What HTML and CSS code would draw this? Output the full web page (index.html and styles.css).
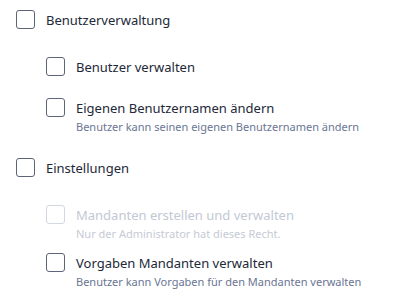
FILE: index.html
```html
<!DOCTYPE html>
<html lang="de">
<head>
    <meta charset="UTF-8">
    <title>Rechte</title>
    <link rel="stylesheet" href="styles.css">
</head>
<body>
    <div class="rights">
        <div class="group">
            <label class="item head">
                <span class="box"></span>
                <span class="text"><span class="label">Benutzerverwaltung</span></span>
            </label>
            <div class="children">
                <label class="item">
                    <span class="box"></span>
                    <span class="text"><span class="label">Benutzer verwalten</span></span>
                </label>
                <label class="item">
                    <span class="box"></span>
                    <span class="text">
                        <span class="label">Eigenen Benutzernamen ändern</span>
                        <span class="desc">Benutzer kann seinen eigenen Benutzernamen ändern</span>
                    </span>
                </label>
            </div>
        </div>
        <div class="group">
            <label class="item head">
                <span class="box"></span>
                <span class="text"><span class="label">Einstellungen</span></span>
            </label>
            <div class="children">
                <label class="item disabled">
                    <span class="box"></span>
                    <span class="text">
                        <span class="label">Mandanten erstellen und verwalten</span>
                        <span class="desc">Nur der Administrator hat dieses Recht.</span>
                    </span>
                </label>
                <label class="item">
                    <span class="box"></span>
                    <span class="text">
                        <span class="label">Vorgaben Mandanten verwalten</span>
                        <span class="desc">Benutzer kann Vorgaben für den Mandanten verwalten</span>
                    </span>
                </label>
            </div>
        </div>
    </div>
</body>
</html>
```

FILE: styles.css
```css
body {
    margin: 0;
    padding: 0;
    background: #ffffff;
    font-family: 'Noto Sans', sans-serif;
    color: #222838;
}

.rights {
    display: flex;
    flex-direction: column;
    gap: 23px;
    padding: 10px 16px 0;
}

.group {
    display: flex;
    flex-direction: column;
    gap: 27px;
}

.children {
    display: flex;
    flex-direction: column;
    gap: 11px;
    padding-left: 30px;
}

.item {
    display: flex;
    align-items: flex-start;
    gap: 11px;
    min-height: 30px;
}

.item.head {
    min-height: 20px;
}

.box {
    flex: none;
    width: 17px;
    height: 17px;
    border: 1.5px solid #5c6478;
    border-radius: 3px;
}

.text {
    display: flex;
    flex-direction: column;
}

.label {
    font-size: 13px;
    line-height: 20px;
}

.desc {
    font-size: 11px;
    line-height: 16px;
    margin-top: 1px;
    color: #6a7594;
}

.disabled .box {
    border-color: #d3d7df;
}

.disabled .label {
    color: #c3c8d4;
}

.disabled .desc {
    color: #c6cad5;
}
```
